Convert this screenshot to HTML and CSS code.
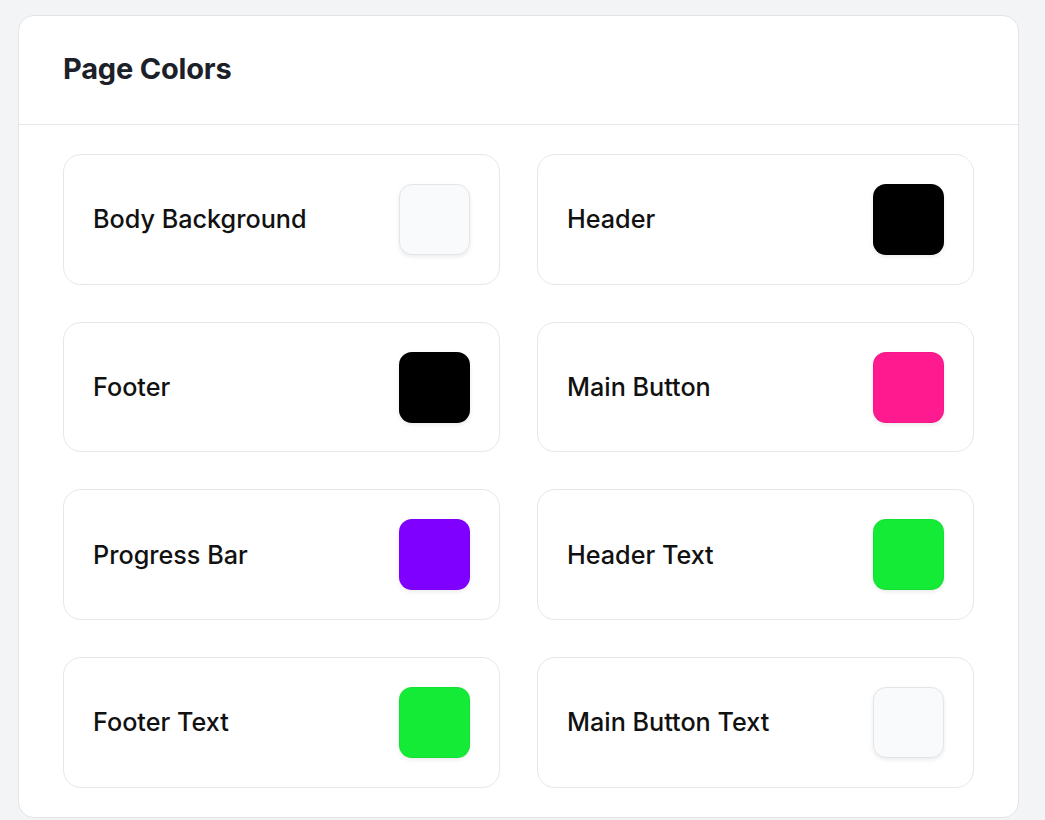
FILE: index.html
```html
<!DOCTYPE html>
<html lang="en">
<head>
<meta charset="utf-8">
<title>Page Colors</title>
<link rel="stylesheet" href="styles.css">
</head>
<body>
<div class="page">
  <section class="card">
    <header class="card-header">
      <h2 class="card-title">Page Colors</h2>
    </header>
    <div class="card-body">
      <div class="color-item"><span class="color-label">Body Background</span><span class="swatch swatch-light" style="background:#f9fafb"></span></div>
      <div class="color-item"><span class="color-label">Header</span><span class="swatch" style="background:#000000"></span></div>
      <div class="color-item"><span class="color-label">Footer</span><span class="swatch" style="background:#000000"></span></div>
      <div class="color-item"><span class="color-label">Main Button</span><span class="swatch" style="background:#ff1a8f"></span></div>
      <div class="color-item"><span class="color-label">Progress Bar</span><span class="swatch" style="background:#8000ff"></span></div>
      <div class="color-item"><span class="color-label">Header Text</span><span class="swatch" style="background:#13eb36"></span></div>
      <div class="color-item"><span class="color-label">Footer Text</span><span class="swatch" style="background:#13eb36"></span></div>
      <div class="color-item"><span class="color-label">Main Button Text</span><span class="swatch swatch-light" style="background:#f9fafb"></span></div>
    </div>
  </section>
</div>
</body>
</html>
```

FILE: styles.css
```css
* { box-sizing: border-box; }
html, body { margin: 0; padding: 0; }
body {
  background: #f3f4f6;
  font-family: Inter, "Noto Sans", "Liberation Sans", sans-serif;
  color: #111111;
}
.page {
  padding: 15px 26px 0 18px;
}
.card {
  background: #ffffff;
  border: 1px solid #e2e4e8;
  border-radius: 16px;
  width: 1001px;
}
.card-header {
  height: 109px;
  padding: 0 44px;
  display: flex;
  align-items: center;
  border-bottom: 1px solid #e5e7eb;
}
.card-title {
  margin: 0 0 4px 0;
  font-size: 29px;
  font-weight: 700;
  color: #1c2129;
  letter-spacing: -0.2px;
}
.card-body {
  padding: 29px 44px 29px 44px;
  display: grid;
  grid-template-columns: 1fr 1fr;
  column-gap: 37px;
  row-gap: 37px;
}
.color-item {
  display: flex;
  align-items: center;
  justify-content: space-between;
  height: 130.7px;
  padding: 0 29px;
  border: 1px solid #e5e7eb;
  border-radius: 18px;
}
.color-label {
  font-size: 25.2px;
  font-weight: 500;
  color: #111111;
}
.swatch {
  width: 71px;
  height: 71px;
  border-radius: 13px;
  border: 1px solid rgba(0,0,0,0.04);
  box-shadow: 0 2px 4px rgba(0,0,0,0.08);
}
.swatch-light {
  border-color: #e3e5e9;
}
```
